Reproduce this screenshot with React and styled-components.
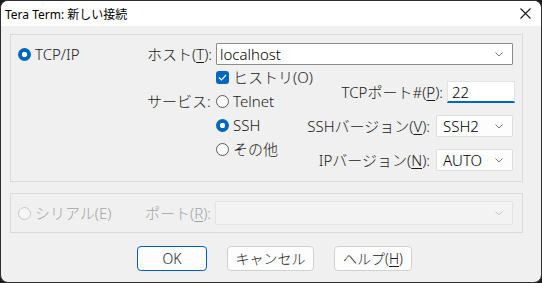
import React from 'react';
import styled, { createGlobalStyle } from 'styled-components';

const GlobalStyle = createGlobalStyle`
  html, body {
    margin: 0;
    padding: 0;
    background: #1c1c1c;
  }
  body {
    font-family: "Noto Sans", "Noto Sans CJK JP", sans-serif;
    font-weight: 300;
    color: #1a1a1a;
  }
  * { box-sizing: border-box; }
`;

const Window = styled.div`
  width: 542px;
  height: 283px;
  background: #f0f0f0;
  border: 1px solid #2e2e2e;
  border-radius: 8px;
  overflow: hidden;
  display: flex;
  flex-direction: column;
`;

const TitleBar = styled.div`
  height: 25px;
  flex: none;
  background: #fff;
  display: flex;
  align-items: center;
  justify-content: space-between;
  padding: 0 10px 0 4px;
  font-size: 12px;
  font-weight: 400;
  color: #000;
`;

const CloseIcon = () => (
  <svg width="11" height="11" viewBox="0 0 11 11">
    <path d="M0.5 0.5 L10.5 10.5 M10.5 0.5 L0.5 10.5" stroke="#1a1a1a" strokeWidth="1.1" fill="none" />
  </svg>
);

const Body = styled.div`
  padding: 8px 0 0 9px;
  font-size: 15px;
  line-height: 20px;
`;

const GroupBox = styled.div`
  width: 513px;
  height: ${(p) => p.$h}px;
  border: 1px solid #dadada;
  display: flex;
  align-items: ${(p) => (p.$center ? 'center' : 'flex-start')};
  padding-top: ${(p) => (p.$center ? 0 : 8)}px;
  margin-top: ${(p) => p.$mt || 0}px;
`;

const SideCol = styled.div`
  width: ${(p) => p.$w}px;
  flex: none;
  padding-left: 7px;
  height: 22px;
  display: flex;
  align-items: center;
  gap: 4px;
  color: ${(p) => (p.$disabled ? '#a3a3a3' : 'inherit')};
`;

const MainGrid = styled.div`
  width: 368px;
  display: grid;
  grid-template-columns: 69px 80px 1fr;
  grid-template-rows: 22px repeat(4, 24px);
  white-space: nowrap;
`;

const Label = styled.div`
  display: flex;
  align-items: center;
  flex: none;
  width: ${(p) => (p.$w ? `${p.$w}px` : 'auto')};
  grid-column: 1;
  grid-row: ${(p) => p.$row};
  color: ${(p) => (p.$disabled ? '#a3a3a3' : 'inherit')};
`;

const U = styled.span`
  text-decoration: underline;
  text-underline-offset: 2px;
`;

const Radio = styled.span`
  width: 13px;
  height: 13px;
  flex: none;
  border-radius: 50%;
  ${(p) =>
    p.$checked
      ? 'background: radial-gradient(circle, #fff 0 2.4px, #0067c0 3px);'
      : p.$disabled
      ? 'border: 1px solid #c6c6c6; background: #f6f6f6;'
      : 'border: 1px solid #5c5c5c; background: #fbfbfb;'}
`;

const CheckBox = styled.span`
  width: 13px;
  height: 13px;
  flex: none;
  border-radius: 3px;
  background: #0067c0;
  display: flex;
  align-items: center;
  justify-content: center;
`;

const Option = styled.div`
  grid-column: 2;
  grid-row: ${(p) => p.$row};
  display: flex;
  align-items: center;
  gap: 4px;
`;

const Chevron = ({ light }) => (
  <svg width="8" height="5" viewBox="0 0 8 5">
    <path d="M0.5 0.5 L4 4 L7.5 0.5" stroke={light ? '#c4c4c4' : '#7a7a7a'} strokeWidth="1" fill="none" />
  </svg>
);

const Combo = styled.div`
  height: ${(p) => p.$h || 22}px;
  width: ${(p) => (p.$w ? `${p.$w}px` : 'auto')};
  background: ${(p) => (p.$disabled ? '#f3f3f3' : p.$edit ? '#fff' : '#fdfdfd')};
  border: 1px solid ${(p) => (p.$disabled ? '#e4e4e4' : p.$edit ? '#8c8c8c' : '#dedede')};
  border-radius: 1px;
  display: flex;
  align-items: center;
  justify-content: space-between;
  padding: 0 9px 0 ${(p) => (p.$edit ? 3 : 6)}px;
  color: #000;
`;

const HostCombo = styled(Combo)`
  grid-column: 2 / 4;
  grid-row: 1;
  margin-right: 2px;
`;

const RightSection = styled.div`
  grid-column: 3;
  grid-row: 2 / span 4;
  padding-top: 16px;
  display: flex;
  flex-direction: column;
  gap: 12px;
`;

const FieldRow = styled.div`
  display: flex;
  justify-content: flex-end;
  align-items: center;
  gap: ${(p) => p.$gap}px;
  padding-right: ${(p) => p.$pr || 0}px;
`;

const PortInput = styled.div`
  width: 68px;
  height: 22px;
  background: #fff;
  border: 1px solid #e3e3e3;
  border-bottom: 2px solid #0067c0;
  padding: 0 4px;
  display: flex;
  align-items: center;
  color: #000;
`;

const ButtonRow = styled.div`
  display: flex;
  justify-content: center;
  gap: 20px;
  margin-top: 13px;
  padding-left: 16px;
  width: 513px;
`;

const Button = styled.div`
  width: ${(p) => p.$w}px;
  height: 25px;
  border-radius: 4px;
  background: #fdfdfd;
  border: 1px solid ${(p) => (p.$primary ? '#005fb8' : '#d0d0d0')};
  display: flex;
  align-items: center;
  justify-content: center;
  font-size: 14px;
  color: #1a1a1a;
`;

export default function App() {
  return (
    <>
      <GlobalStyle />
      <Window>
        <TitleBar>
          <span>Tera Term: 新しい接続</span>
          <CloseIcon />
        </TitleBar>
        <Body>
          <GroupBox $h={148}>
            <SideCol $w={136}>
              <Radio $checked />
              <span>TCP/IP</span>
            </SideCol>
            <MainGrid>
              <Label $row={1}>
                ホスト(<U>T</U>):
              </Label>
              <HostCombo $edit>
                <span>localhost</span>
                <Chevron />
              </HostCombo>
              <Option $row={2}>
                <CheckBox>
                  <svg width="9" height="7" viewBox="0 0 9 7">
                    <path d="M1 3.5 L3.5 6 L8 1" stroke="#fff" strokeWidth="1.2" fill="none" />
                  </svg>
                </CheckBox>
                <span>ヒストリ(O)</span>
              </Option>
              <Label $row={3}>サービス:</Label>
              <Option $row={3}>
                <Radio />
                <span>Telnet</span>
              </Option>
              <Option $row={4}>
                <Radio $checked />
                <span>SSH</span>
              </Option>
              <Option $row={5}>
                <Radio />
                <span>その他</span>
              </Option>
              <RightSection>
                <FieldRow $gap={4}>
                  <span>
                    TCPポート#(<U>P</U>):
                  </span>
                  <PortInput>22</PortInput>
                </FieldRow>
                <FieldRow $gap={6} $pr={2}>
                  <span>
                    SSHバージョン(<U>V</U>):
                  </span>
                  <Combo $w={77}>
                    <span>SSH2</span>
                    <Chevron />
                  </Combo>
                </FieldRow>
                <FieldRow $gap={6} $pr={2}>
                  <span>
                    IPバージョン(<U>N</U>):
                  </span>
                  <Combo $w={77}>
                    <span>AUTO</span>
                    <Chevron />
                  </Combo>
                </FieldRow>
              </RightSection>
            </MainGrid>
          </GroupBox>
          <GroupBox $h={40} $center $mt={11}>
            <SideCol $w={134} $disabled>
              <Radio $disabled />
              <span>シリアル(E)</span>
            </SideCol>
            <Label $disabled $w={70}>
              ポート(<U>R</U>):
            </Label>
            <Combo $w={298} $h={24} $disabled>
              <span />
              <Chevron light />
            </Combo>
          </GroupBox>
          <ButtonRow>
            <Button $w={70} $primary>OK</Button>
            <Button $w={87}>キャンセル</Button>
            <Button $w={78}>
              ヘルプ(<U>H</U>)
            </Button>
          </ButtonRow>
        </Body>
      </Window>
    </>
  );
}
